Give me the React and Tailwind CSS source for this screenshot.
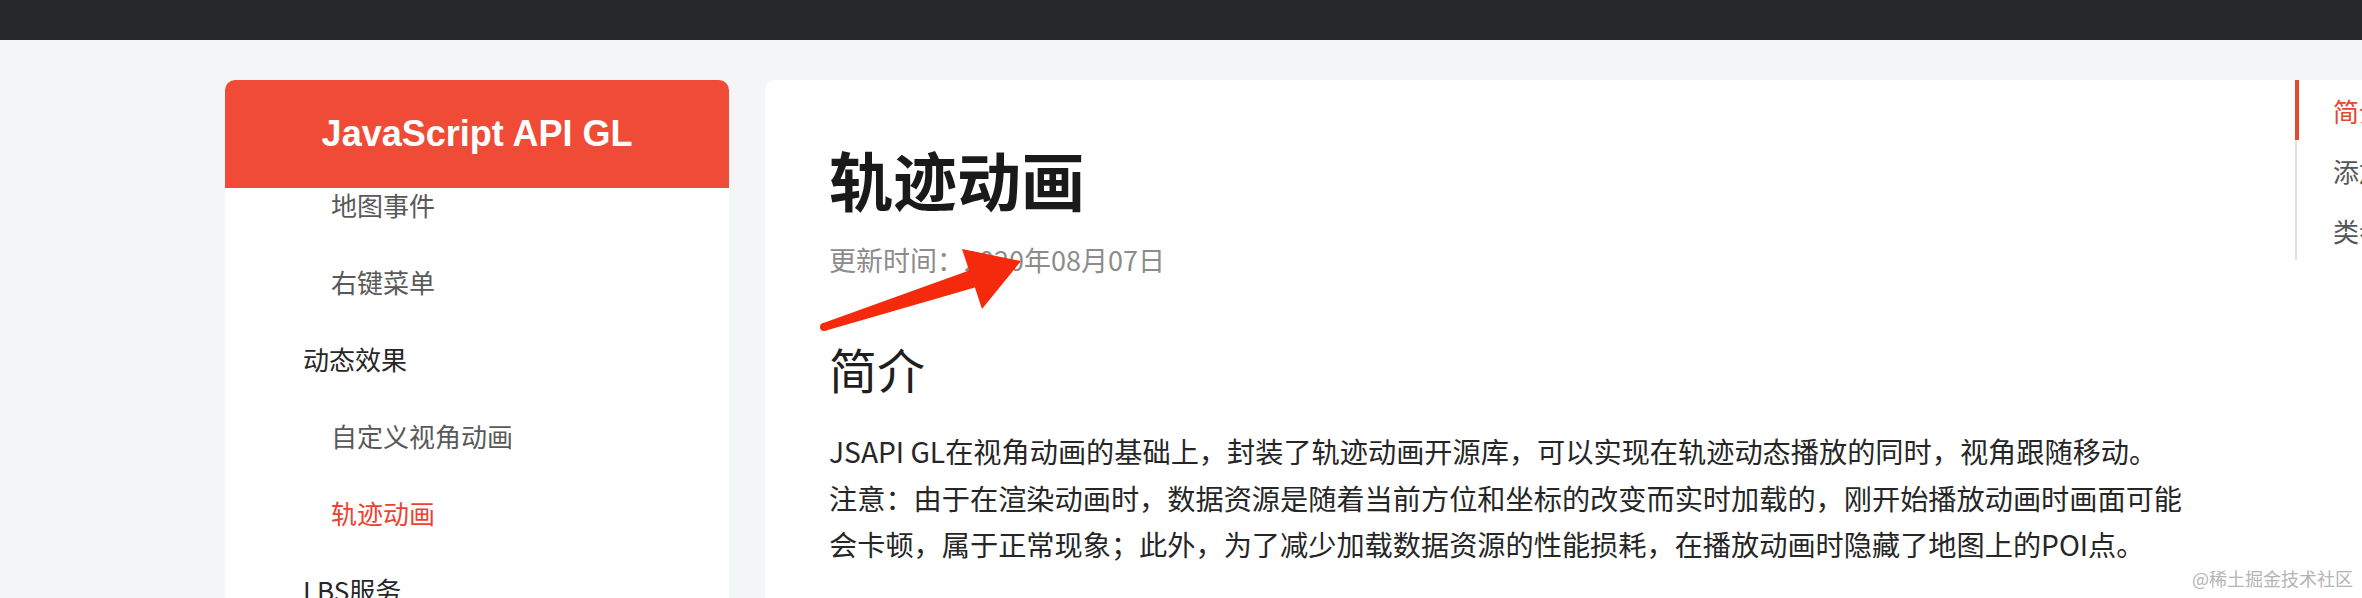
const cjk = { fontFamily: '"Noto Sans CJK SC", "Liberation Sans", sans-serif' };

const navItems = [
  { label: "地图事件", level: 2 },
  { label: "右键菜单", level: 2 },
  { label: "动态效果", level: 1 },
  { label: "自定义视角动画", level: 2 },
  { label: "轨迹动画", level: 2, active: true },
  { label: "LBS服务", level: 1 },
];

const tocItems = ["简介", "添加轨迹动画", "类参考"];

function Sidebar() {
  return (
    <aside className="flex w-[504px] shrink-0 flex-col overflow-hidden rounded-t-[10px] bg-white">
      <div
        className="flex h-[108px] shrink-0 items-center justify-center bg-[#f04b37] text-[36px] font-bold text-white"
        style={{ fontFamily: '"Liberation Sans", Arial, sans-serif' }}
      >
        JavaScript API GL
      </div>
      <div className="flex-1 overflow-hidden">
        <ul className="-mt-[22px]">
          {navItems.map((item) => {
            const color = item.active
              ? "text-[#f0412f]"
              : item.level === 1
                ? "text-[#262626]"
                : "text-[#595959]";
            const indent = item.level === 1 ? "pl-[78px]" : "pl-[106px]";
            return (
              <li key={item.label} className={`flex h-[77px] items-center text-[26px] ${indent} ${color}`}>
                {item.label}
              </li>
            );
          })}
        </ul>
      </div>
    </aside>
  );
}

function Toc() {
  return (
    <nav className="relative w-[67px] shrink-0">
      <div className="relative border-l-2 border-[#e2e2e2]">
        <span className="absolute -left-[2px] top-0 h-[60px] w-[4px] bg-[#e8482f]" />
        {tocItems.map((t, i) => (
          <div
            key={t}
            className={`flex h-[60px] items-center whitespace-nowrap pl-[36px] text-[26px] ${
              i === 0 ? "text-[#e8482f]" : "text-[#555]"
            }`}
          >
            {t}
          </div>
        ))}
      </div>
    </nav>
  );
}

function Article() {
  return (
    <article className="flex-1 pl-[64px] pt-[66px]">
      <h1 className="text-[64px] font-bold leading-[64px] text-[#1a1a1a]">轨迹动画</h1>
      <p className="mt-[37px] text-[27px] leading-[26px] text-[#8c8c8c]">更新时间：2020年08月07日</p>
      <h2 className="mt-[71px] text-[48px] leading-[48px] text-[#1f1f1f]">简介</h2>
      <div className="mt-[36px] whitespace-nowrap text-[28.2px] leading-[46.5px] text-[#262626]">
        <p>JSAPI GL在视角动画的基础上，封装了轨迹动画开源库，可以实现在轨迹动态播放的同时，视角跟随移动。</p>
        <p>
          注意：由于在渲染动画时，数据资源是随着当前方位和坐标的改变而实时加载的，刚开始播放动画时画面可能
          <br />
          会卡顿，属于正常现象；此外，为了减少加载数据资源的性能损耗，在播放动画时隐藏了地图上的POI点。
        </p>
      </div>
    </article>
  );
}

function Arrow() {
  return (
    <svg className="pointer-events-none absolute left-0 top-0" width="2362" height="598">
      <polygon
        fill="#f52a0c"
        points="822.7,323.2 969.1,270.5 962,249 1021,261 982,309 974.9,287.5 825.3,330.8"
      />
      <circle cx="824" cy="327" r="4" fill="#f52a0c" />
    </svg>
  );
}

export default function App() {
  return (
    <div className="relative h-[598px] w-[2362px] overflow-hidden bg-[#f4f5f7]" style={cjk}>
      <div className="h-[40px] bg-[#27282b]" />
      <div className="flex h-[558px] pl-[225px] pt-[40px]">
        <Sidebar />
        <main className="ml-[36px] flex flex-1 rounded-tl-[10px] bg-white">
          <Article />
          <Toc />
        </main>
      </div>
      <Arrow />
      <div className="absolute bottom-[6px] right-[9px] text-[18px] text-[#b4b4b4]">@稀土掘金技术社区</div>
    </div>
  );
}
